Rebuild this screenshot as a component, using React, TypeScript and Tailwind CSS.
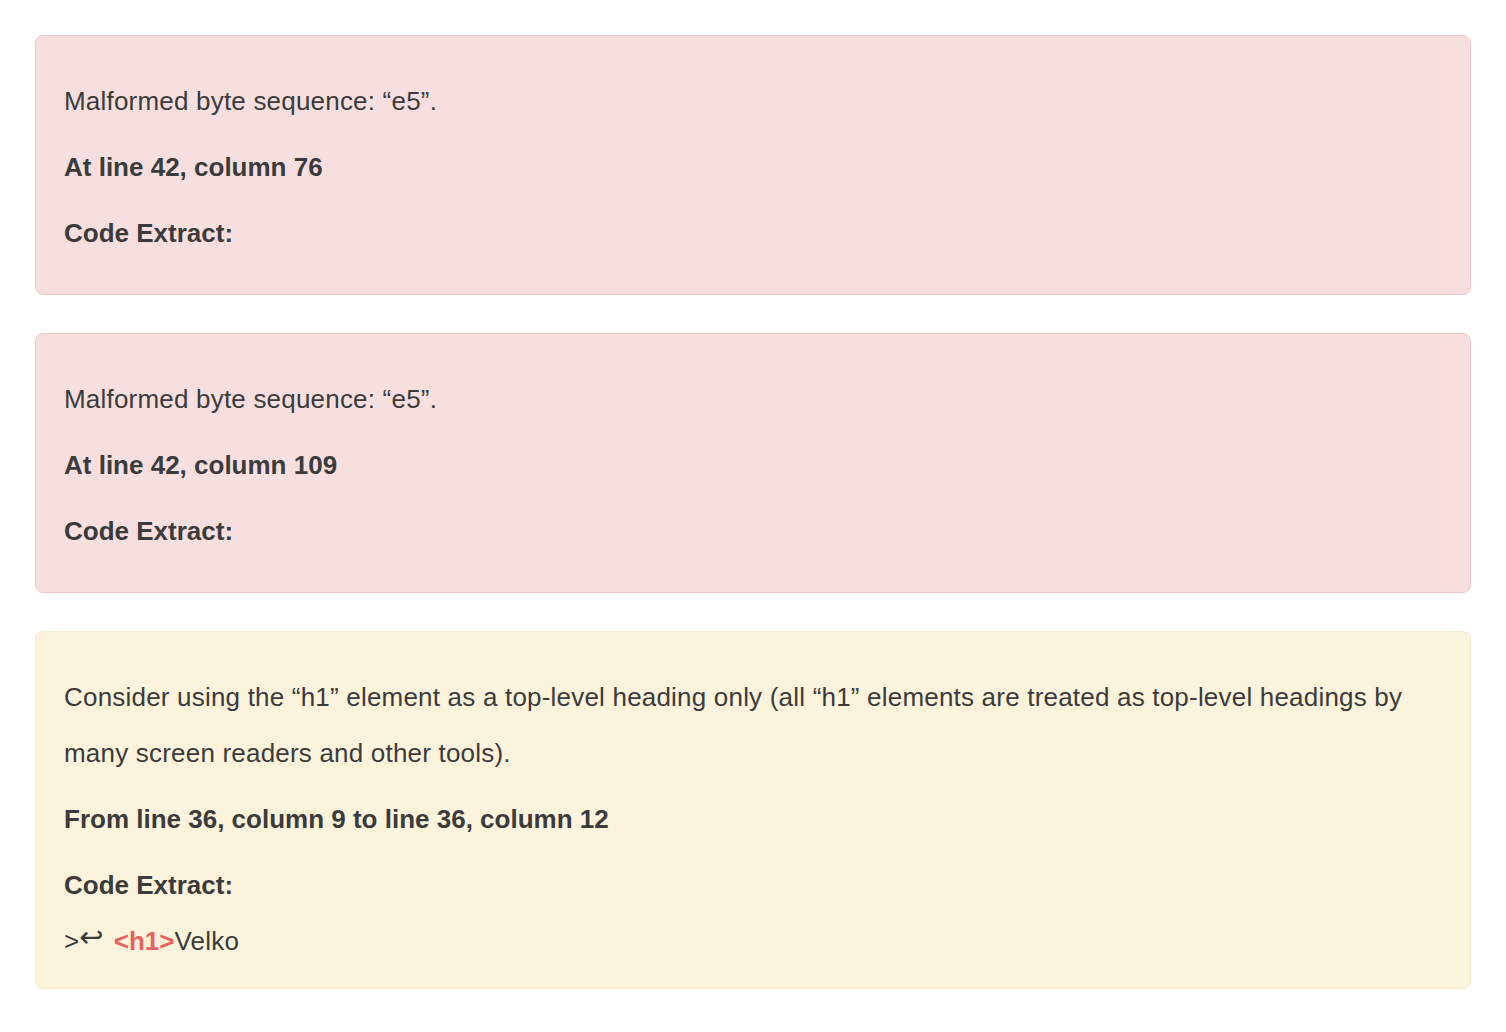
import React from 'react';

type Message = {
  kind: 'error' | 'warning';
  text: string;
  location: string;
  extract?: boolean;
};

const messages: Message[] = [
  { kind: 'error', text: 'Malformed byte sequence: \u201ce5\u201d.', location: 'At line 42, column 76' },
  { kind: 'error', text: 'Malformed byte sequence: \u201ce5\u201d.', location: 'At line 42, column 109' },
  {
    kind: 'warning',
    text: 'Consider using the \u201ch1\u201d element as a top-level heading only (all \u201ch1\u201d elements are treated as top-level headings by many screen readers and other tools).',
    location: 'From line 36, column 9 to line 36, column 12',
    extract: true,
  },
];

export default function App() {
  return (
    <div
      className="min-h-screen bg-white px-[35px] pt-[35px] text-[26px] leading-[56px] text-[#3b3b3b]"
      style={{ fontFamily: '"Liberation Sans", Arial, sans-serif' }}
    >
      <div className="flex flex-col gap-[38px]">
        {messages.map((m, i) => (
          <div
            key={i}
            className={
              m.kind === 'error'
                ? 'rounded-[8px] border border-[#efc9c9] bg-[#f7dfdf] px-[28px] pt-[37px] pb-[23px]'
                : 'rounded-[8px] border border-[#f8ebc6] bg-[#fbf3dc] px-[28px] pt-[37px] pb-[19px]'
            }
          >
            <p className="mb-[10px] tracking-[0.2px]">{m.text}</p>
            <p className="mb-[10px] font-bold">{m.location}</p>
            <p className={m.extract ? 'font-bold' : 'mb-[10px] font-bold'}>Code Extract:</p>
            {m.extract && (
              <p className="h-[56px]">
                &gt;
                <span
                  className="relative -top-[3px] mr-[3px] text-[29px] leading-[0]"
                  style={{ fontFamily: '"DejaVu Sans", sans-serif' }}
                >
                  {'\u21a9'}
                </span>{' '}
                <span className="font-bold text-[#e8625f]">&lt;h1&gt;</span>
                <span className="tracking-[0.2px]">Velko</span>
              </p>
            )}
          </div>
        ))}
      </div>
    </div>
  );
}
